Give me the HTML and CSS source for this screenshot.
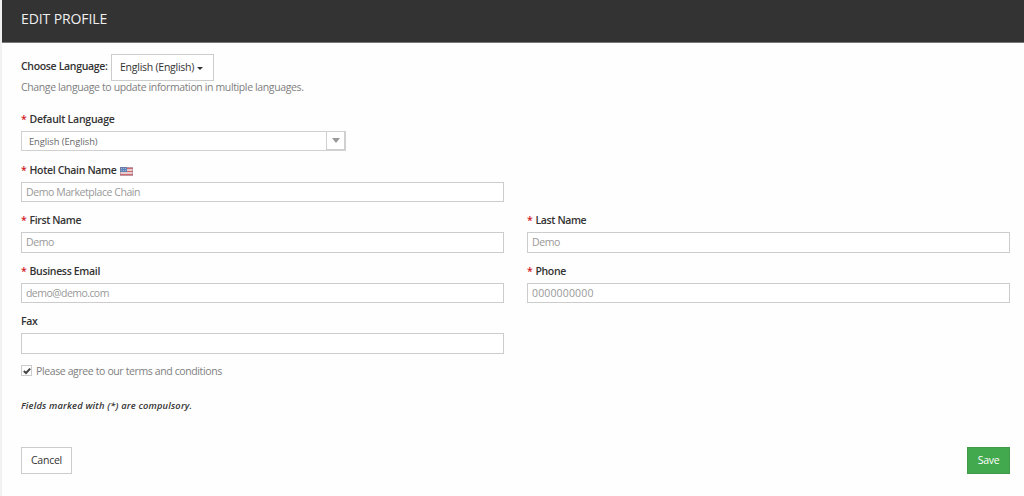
FILE: index.html
```html
<!DOCTYPE html>
<html lang="en">
<head>
<meta charset="utf-8">
<title>Edit Profile</title>
<link rel="stylesheet" href="styles.css">
</head>
<body>
<main class="panel">
  <header class="panel-heading">EDIT PROFILE</header>
  <form class="panel-body">
    <div class="language-row">
      <span class="label choose">Choose Language:</span>
      <button type="button" class="btn language-btn">English (English)<span class="caret"></span></button>
    </div>
    <p class="help">Change language to update information in multiple languages.</p>

    <div class="fields">
      <div class="field wide">
        <div class="label default-lang"><span class="req">*</span>Default Language</div>
        <div class="select"><span class="select-value">English (English)</span><span class="select-arrow"></span></div>
      </div>
      <div class="field wide half">
        <div class="label"><span class="req">*</span>Hotel Chain Name
          <svg class="flag" viewBox="0 0 13 9" width="13" height="9">
            <rect width="13" height="9" fill="#e0b4b5"/>
            <path d="M0 1.5h13M0 4.5h13M0 7.5h13" stroke="#cc6c70" stroke-width="1.2"/>
            <path d="M0 3h13M0 6h13" stroke="#eee0e0"/>
            <rect width="7" height="5" fill="#5d82b8"/>
            <path d="M1 1.5h5M1 3.5h5" stroke="#9eb4d4" stroke-dasharray="1 1"/>
            <rect x=".5" y=".5" width="12" height="8" fill="none" stroke="#8c6f88" stroke-opacity=".4"/>
          </svg>
        </div>
        <div class="input">Demo Marketplace Chain</div>
      </div>
      <div class="field">
        <div class="label name"><span class="req">*</span>First Name</div>
        <div class="input">Demo</div>
      </div>
      <div class="field">
        <div class="label name"><span class="req">*</span>Last Name</div>
        <div class="input">Demo</div>
      </div>
      <div class="field">
        <div class="label"><span class="req">*</span>Business Email</div>
        <div class="input email">demo@demo.com</div>
      </div>
      <div class="field">
        <div class="label name"><span class="req">*</span>Phone</div>
        <div class="input digits">0000000000</div>
      </div>
      <div class="field wide half">
        <div class="label">Fax</div>
        <div class="input"></div>
      </div>
    </div>

    <div class="agree">
      <span class="checkbox"><svg viewBox="0 0 8 8" width="8" height="8"><path d="M.8 4.1 3 6 7.2 1.6" fill="none" stroke="#444" stroke-width="2"/></svg></span>
      <span>Please agree to our terms and conditions</span>
    </div>
    <p class="note">Fields marked with (*) are compulsory.</p>
    <footer class="actions">
      <button type="button" class="btn">Cancel</button>
      <button type="button" class="btn save">Save</button>
    </footer>
  </form>
</main>
</body>
</html>
```
FILE: styles.css
```css
* { box-sizing: border-box; }

body {
  margin: 0;
  background: #f1f1f1;
  font: 10.5px/14px "Open Sans", "Noto Sans", sans-serif;
  color: #333;
}

.panel {
  height: 496px;
  margin-left: 2px;
  background: #fefefe;
}

.panel-heading {
  height: 43px;
  padding-left: 19px;
  border-bottom: 1px solid #777;
  background: #333;
  color: #f0f0f0;
  font-size: 14px;
  line-height: 38px;
  letter-spacing: -0.11px;
}

.panel-body { padding: 11px 14px 0 19px; }

.language-row { display: flex; align-items: center; height: 27px; }

.label {
  color: #333;
  font-weight: 600;
  letter-spacing: -0.33px;
  white-space: nowrap;
}
.choose { width: 90px; padding-bottom: 3px; }
.default-lang { letter-spacing: -0.25px; }
.name { letter-spacing: -0.38px; }

.btn {
  height: 27px;
  padding: 0 9px;
  border: 1px solid #ccc;
  background: #fff;
  color: #333;
  font: inherit;
  letter-spacing: -0.25px;
  white-space: nowrap;
}

.language-btn {
  display: flex;
  align-items: center;
  width: 103px;
  padding: 0 0 2px 8px;
}

.caret {
  margin: 3px 0 0 3px;
  border: 3px solid transparent;
  border-top-color: #333;
  border-bottom: 0;
}

.help {
  margin: -1px 0 0;
  color: #808080;
  letter-spacing: -0.37px;
}

.fields {
  display: grid;
  grid-template-columns: 483px 483px;
  column-gap: 23px;
  grid-auto-rows: 50.5px;
  margin-top: 18px;
}
.wide { grid-column: 1 / -1; }
.half { width: 483px; }
.field .label { height: 19px; }

.req {
  display: inline-block;
  width: 8.5px;
  color: #d0181c;
  font-size: 10.5px;
  line-height: 10px;
}

.flag { vertical-align: -2px; margin-left: 1px; }

.input {
  height: 20.5px;
  padding-left: 4px;
  border: 1px solid #ccc;
  background: #fff;
  color: #999;
  line-height: 18px;
  letter-spacing: -0.43px;
}
.email { letter-spacing: -0.55px; }
.digits { letter-spacing: 0.15px; }

.select {
  display: flex;
  width: 325px;
  height: 20px;
  border: 1px solid #d0d0d0;
  background: #fff;
}
.select-value {
  flex: 1;
  padding-left: 7px;
  color: #666;
  font-size: 9.3px;
  line-height: 19px;
  letter-spacing: -0.05px;
}
.select-arrow {
  display: flex;
  align-items: center;
  justify-content: center;
  width: 19px;
  border: 1px solid #d0d0d0;
  border-width: 0 1px 1px;
}
.select-arrow::before {
  content: "";
  border: 4px solid transparent;
  border-top: 5px solid #999;
  border-bottom: 0;
}

.agree {
  display: flex;
  align-items: center;
  gap: 4px;
  margin-top: -1px;
  color: #808080;
  letter-spacing: -0.38px;
}
.checkbox {
  display: grid;
  place-items: center;
  width: 11px;
  height: 11px;
  border: 1px solid #ccc;
}

.note {
  margin: 21px 0 0;
  font-size: 9.3px;
  font-style: italic;
  font-weight: 600;
  letter-spacing: 0.18px;
}

.actions {
  display: flex;
  justify-content: space-between;
  margin-top: 34px;
}
.save {
  width: 43px;
  border-color: #409a49;
  background: #43a94e;
  color: #fff;
}
```
